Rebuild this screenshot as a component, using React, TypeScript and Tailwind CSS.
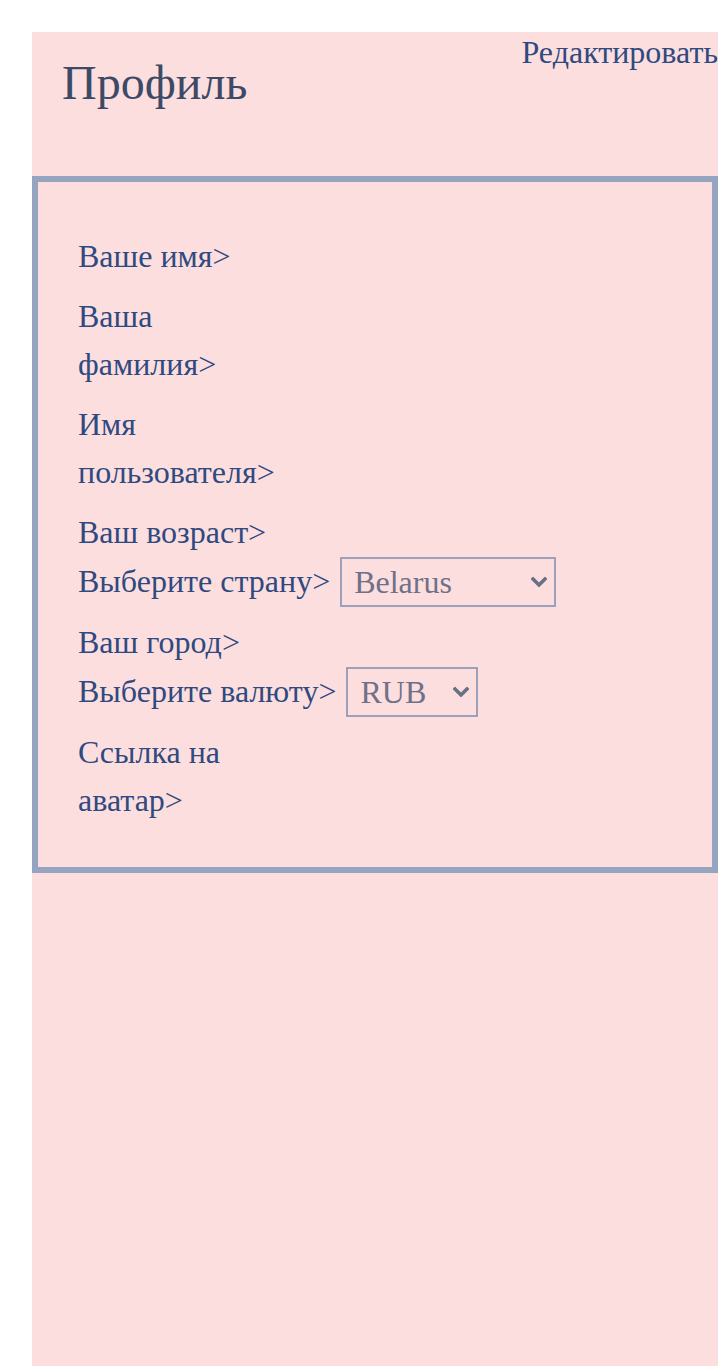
import { useState } from 'react';

const serif = "font-['Liberation_Serif','Times_New_Roman',serif]";

function Chevron() {
  return (
    <svg
      width="16"
      height="11"
      viewBox="0 0 16 11"
      className="pointer-events-none absolute right-[9px] top-1/2 -translate-y-1/2"
    >
      <path d="M2 2.5 L8 8.5 L14 2.5" fill="none" stroke="#6b6f85" strokeWidth="3.6" strokeLinecap="square" />
    </svg>
  );
}

function Select({
  value,
  options,
  width,
  onChange,
}: {
  value: string;
  options: string[];
  width: string;
  onChange: (v: string) => void;
}) {
  return (
    <div className={`relative ml-[10px] h-[50px] translate-y-[1px] ${width}`}>
      <select
        value={value}
        onChange={(e) => onChange(e.target.value)}
        className={`h-full w-full appearance-none border-2 border-[#9ca0bb] bg-transparent pl-3 text-[32px] leading-[46px] text-[#6f7189] outline-none ${serif}`}
      >
        {options.map((o) => (
          <option key={o} value={o}>
            {o}
          </option>
        ))}
      </select>
      <Chevron />
    </div>
  );
}

export default function App() {
  const [country, setCountry] = useState('Belarus');
  const [currency, setCurrency] = useState('RUB');

  return (
    <div className={`min-h-screen bg-white pl-8 pt-8 ${serif}`}>
      <div className="min-h-[1334px] bg-[#fddede]">
        {/* header */}
        <div className="flex h-[144px] items-start justify-between">
          <h1 className="ml-[30px] mt-[23px] text-[48px] leading-[56px] text-[#3c4a66]">Профиль</h1>
          <button className="mt-[2px] whitespace-nowrap text-[32px] leading-[36px] text-[#2e4a80]">
            Редактировать
          </button>
        </div>

        {/* form */}
        <div className="flex flex-col gap-3 border-[6px] border-[#95a4c1] pb-[43px] pl-10 pt-[50px] text-[32px] leading-[48px] text-[#2e4a80]">
          <div className="max-w-[208px]">Ваше имя&gt;</div>
          <div className="max-w-[208px]">Ваша фамилия&gt;</div>
          <div className="max-w-[208px]">Имя пользователя&gt;</div>
          <div>
            <div className="max-w-[208px]">Ваш возраст&gt;</div>
            <div className="flex items-center">
              <span>Выберите страну&gt;</span>
              <Select
                value={country}
                options={['Belarus', 'Russia', 'Ukraine', 'Kazakhstan']}
                width="w-[216px]"
                onChange={setCountry}
              />
            </div>
          </div>
          <div>
            <div className="max-w-[208px]">Ваш город&gt;</div>
            <div className="flex items-center">
              <span>Выберите валюту&gt;</span>
              <Select
                value={currency}
                options={['RUB', 'BYN', 'USD', 'EUR']}
                width="w-[132px]"
                onChange={setCurrency}
              />
            </div>
          </div>
          <div className="max-w-[208px]">Ссылка на аватар&gt;</div>
        </div>
      </div>
    </div>
  );
}
